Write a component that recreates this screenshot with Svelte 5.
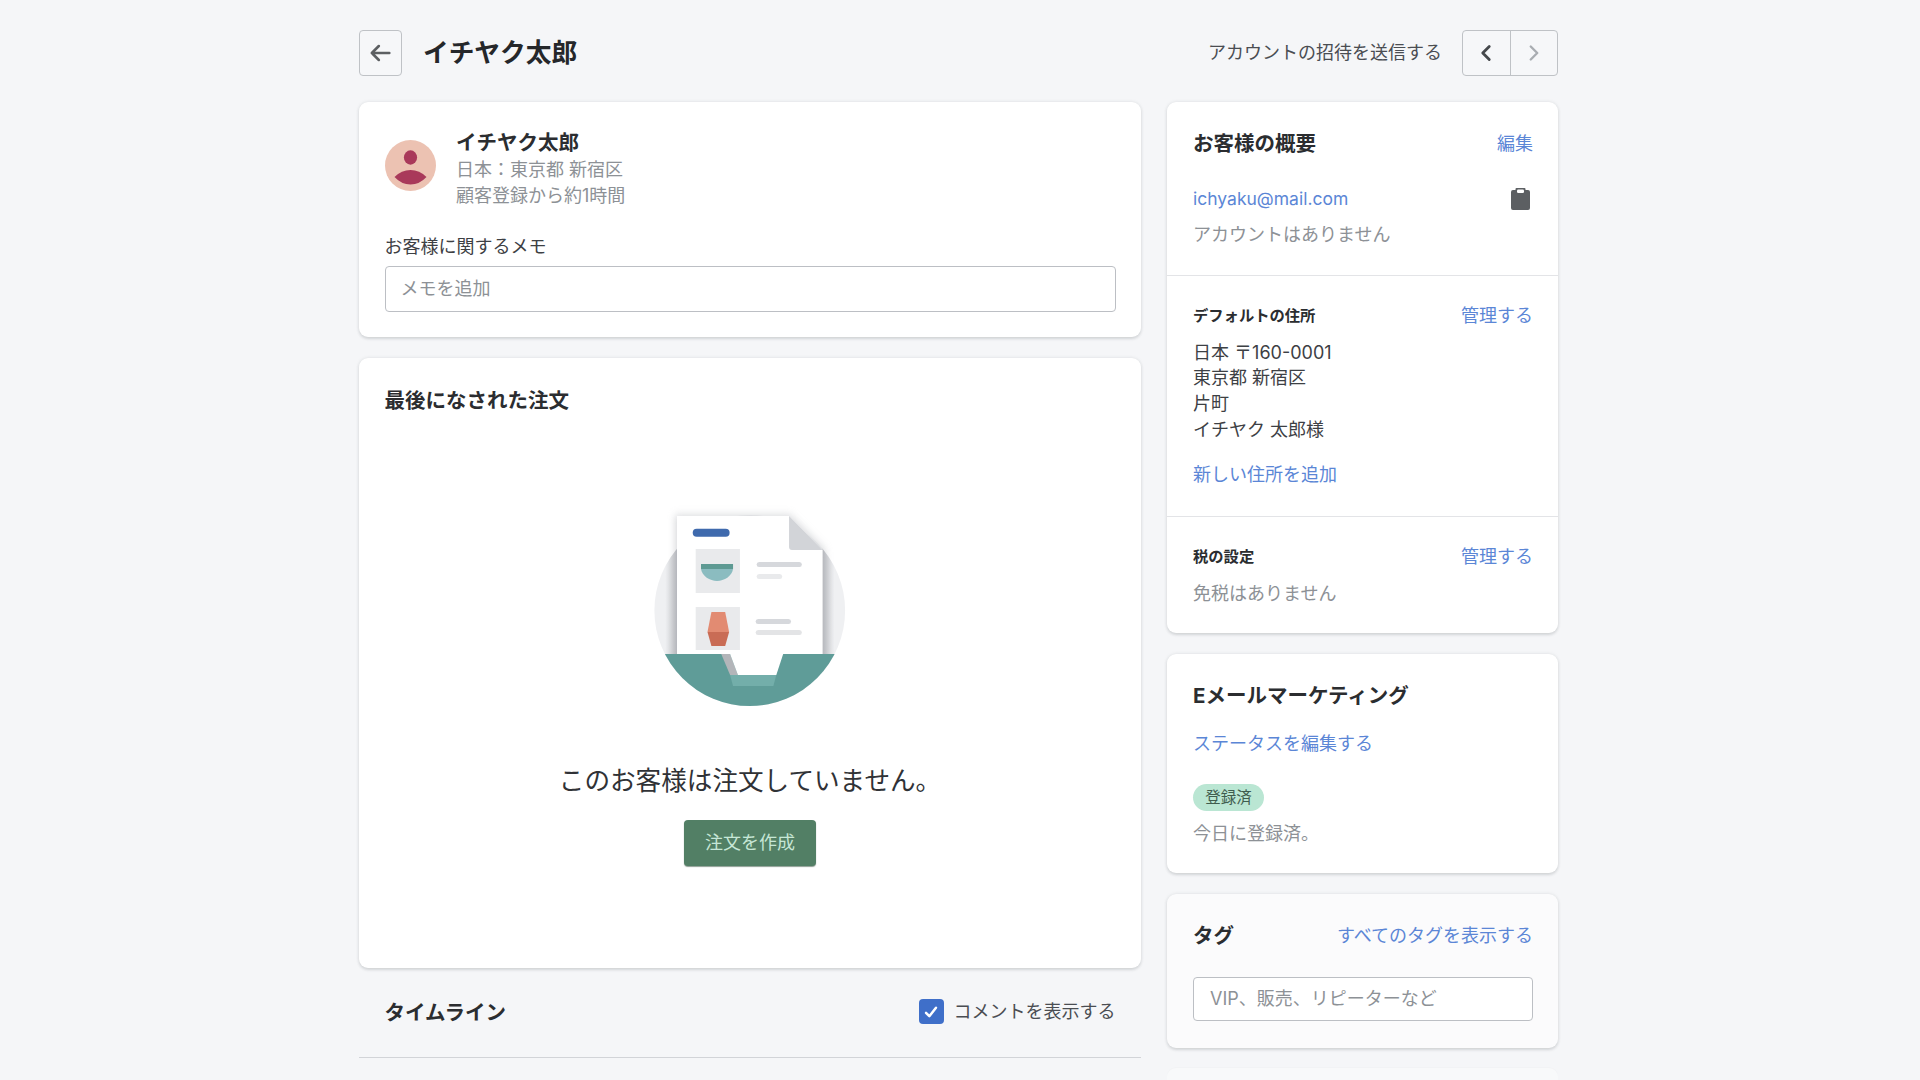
<script>
	const address = ["日本 〒160-0001", "東京都 新宿区", "片町", "イチヤク 太郎様"];
</script>

<div class="page">
	<div class="wrap">
		<header class="topbar">
			<button class="icon-btn back" type="button" aria-label="戻る">
				<svg viewBox="0 0 24 24" width="28" height="28" fill="none" stroke="#5c5f62" stroke-width="2.2" stroke-linecap="round" stroke-linejoin="round">
					<path d="M20 12H5M11 6l-6 6 6 6" />
				</svg>
			</button>
			<h1>イチヤク太郎</h1>
			<span class="invite">アカウントの招待を送信する</span>
			<div class="pager">
				<button type="button" aria-label="前へ">
					<svg viewBox="0 0 24 24" width="26" height="26" fill="none" stroke="#45484c" stroke-width="2.6" stroke-linecap="round" stroke-linejoin="round"><path d="M15 6l-6 6 6 6" /></svg>
				</button>
				<button type="button" aria-label="次へ">
					<svg viewBox="0 0 24 24" width="26" height="26" fill="none" stroke="#a9adb2" stroke-width="2.2" stroke-linecap="round" stroke-linejoin="round"><path d="M9 6l6 6-6 6" /></svg>
				</button>
			</div>
		</header>

		<div class="columns">
			<main class="col-main">
				<section class="card profile">
					<div class="who">
						<svg class="avatar" viewBox="0 0 51 51" width="51" height="51">
							<circle cx="25.5" cy="25.5" r="25.5" fill="#ecc2b2" />
							<ellipse cx="25.5" cy="17.5" rx="6.6" ry="7.2" fill="#a9395a" />
							<path d="M9.5 37Q16.5 30 25.5 30T41.5 37Q34.5 44.5 25.5 44.5T9.5 37z" fill="#a9395a" />
						</svg>
						<div class="who-text">
							<div class="name">イチヤク太郎</div>
							<div class="muted">日本：東京都 新宿区</div>
							<div class="muted">顧客登録から約1時間</div>
						</div>
					</div>
					<div class="label">お客様に関するメモ</div>
					<div class="field">メモを追加</div>
				</section>

				<section class="card orders">
					<h2>最後になされた注文</h2>
					<div class="empty">
						<svg class="illus" viewBox="0 0 260 240" width="260" height="240">
							<defs>
								<clipPath id="disc"><ellipse cx="132" cy="120.5" rx="97" ry="95.5" /></clipPath>
								<clipPath id="above"><rect x="0" y="0" width="270" height="164" /></clipPath>
								<filter id="soft" x="-20%" y="-20%" width="140%" height="140%"><feGaussianBlur stdDeviation="4" /></filter>
								<linearGradient id="shadeL" x1="0" x2="1" y1="0" y2="0">
									<stop offset="0" stop-color="#c4c6ca" stop-opacity="0" />
									<stop offset="1" stop-color="#b4b6bb" />
								</linearGradient>
								<linearGradient id="shadeR" x1="0" x2="1" y1="0" y2="0">
									<stop offset="0" stop-color="#b4b6bb" />
									<stop offset="1" stop-color="#c4c6ca" stop-opacity="0" />
								</linearGradient>
							</defs>
							<g transform="scale(0.983 1)">
								<g clip-path="url(#disc)">
									<rect x="30" y="20" width="210" height="200" fill="#eff0f2" />
									<rect x="46" y="50" width="12" height="115" fill="url(#shadeL)" />
									<rect x="206" y="50" width="12" height="115" fill="url(#shadeR)" />
									<rect x="30" y="164" width="210" height="60" fill="#5f9c98" />
								</g>
								<g clip-path="url(#above)">
									<path d="M56 25H173L209 60V170H56z" fill="#b9bbc0" opacity="0.55" filter="url(#soft)" />
								</g>
								<path d="M58 26H172L206 60V164H58z" fill="#fff" />
								<path d="M172 26L206 60H175Q172 60 172 57z" fill="#d2d4d8" />
								<rect x="74" y="38.7" width="37.5" height="8" rx="4" fill="#3f6aad" />
								<rect x="77" y="59" width="45" height="44" fill="#e9eaec" />
								<path d="M82.4 79H115C114 86 106 91 98.7 91S83.4 86 82.4 79z" fill="#8bbcc0" />
								<rect x="82.4" y="74" width="32.6" height="5" fill="#5e9a93" />
								<rect x="139" y="72" width="46" height="5" rx="2.5" fill="#d6d8dc" />
								<rect x="139" y="84" width="26" height="5" rx="2.5" fill="#e9eaec" />
								<rect x="77" y="117" width="45" height="43" fill="#e9eaec" />
								<path d="M93 122H107L111 142H89z" fill="#e28b72" />
								<path d="M89 142H111L107 156H93z" fill="#c96c55" />
								<rect x="138" y="129" width="36" height="5" rx="2.5" fill="#d6d8dc" />
								<rect x="138" y="140" width="47" height="5" rx="2.5" fill="#e3e4e6" />
								<path d="M103 164L112 185H120L112 164z" fill="#b3b5b9" />
								<path d="M112 164L120 185H159L166 164z" fill="#fff" />
								<path d="M112 185H159L156 196H115z" fill="#73aeaa" />
							</g>
						</svg>
						<p class="empty-title">このお客様は注文していません。</p>
						<button class="primary" type="button">注文を作成</button>
					</div>
				</section>

				<div class="timeline">
					<h2>タイムライン</h2>
					<label class="check">
						<span class="box">
							<svg viewBox="0 0 24 24" width="20" height="20" fill="none" stroke="#fff" stroke-width="3" stroke-linecap="round" stroke-linejoin="round"><path d="M6 13l4 4 8-10" /></svg>
						</span>
						コメントを表示する
					</label>
				</div>
			</main>

			<aside class="col-side">
				<section class="card">
					<div class="block first">
						<div class="row">
							<h2>お客様の概要</h2>
							<a href="#edit">編集</a>
						</div>
						<div class="row email">
							<a href="#mail">ichyaku@mail.com</a>
							<svg class="clip" viewBox="0 0 19 22" width="19" height="22">
								<path d="M2 2h2.5V1a1 1 0 0 1 1-1h8a1 1 0 0 1 1 1v1H17a2 2 0 0 1 2 2v16a2 2 0 0 1-2 2H2a2 2 0 0 1-2-2V4a2 2 0 0 1 2-2z" fill="#5c5f62" />
								<rect x="6" y="1.5" width="7" height="3.5" rx="1.2" fill="#fff" />
							</svg>
						</div>
						<div class="muted none">アカウントはありません</div>
					</div>
					<div class="block">
						<div class="row">
							<h3>デフォルトの住所</h3>
							<a href="#manage">管理する</a>
						</div>
						<div class="lines">
							{#each address as line}
								<div>{line}</div>
							{/each}
						</div>
						<a class="add" href="#add">新しい住所を追加</a>
					</div>
					<div class="block last">
						<div class="row">
							<h3>税の設定</h3>
							<a href="#tax">管理する</a>
						</div>
						<div class="muted tax">免税はありません</div>
					</div>
				</section>

				<section class="card pad">
					<h2>Eメールマーケティング</h2>
					<a class="status" href="#status">ステータスを編集する</a>
					<span class="badge">登録済</span>
					<div class="muted">今日に登録済。</div>
				</section>

				<section class="card pad tags">
					<div class="row">
						<h2>タグ</h2>
						<a href="#tags">すべてのタグを表示する</a>
					</div>
					<div class="field">VIP、販売、リピーターなど</div>
				</section>

				<section class="stub"></section>
			</aside>
		</div>
	</div>
</div>

<style>
:global(body) {
	margin: 0;
	background: #f5f6f8;
}

.page {
	height: 1080px;
	overflow: hidden;
	font-family: Inter, "Noto Sans CJK JP", sans-serif;
	font-size: 18px;
	line-height: 25.7px;
	color: #303236;
}

.wrap {
	width: 1199px;
	margin-left: 359px;
	padding-top: 30px;
}

h1, h2, h3, p {
	margin: 0;
}

h1 {
	font-size: 25.7px;
	line-height: 46px;
	font-weight: 700;
	color: #25272a;
	margin-left: 21px;
}

h2 {
	font-size: 20.5px;
	line-height: 27px;
	font-weight: 700;
	color: #2b2d30;
}

h3 {
	font-size: 15.3px;
	line-height: 25.7px;
	font-weight: 700;
	color: #2b2d30;
}

a {
	color: #5b86d6;
	text-decoration: none;
}

button {
	font: inherit;
	cursor: pointer;
}

.topbar {
	display: flex;
	align-items: center;
	height: 46px;
}

.icon-btn,
.pager {
	border: 1.5px solid #bfc2c6;
	border-radius: 4px;
	background: #f6f7f9;
	box-sizing: border-box;
	height: 46px;
}

.back {
	width: 43px;
	padding: 0 1px 0 0;
	display: flex;
	align-items: center;
	justify-content: center;
}

.invite {
	margin-left: auto;
	margin-right: 20px;
	color: #4a4d52;
}

.pager {
	display: flex;
	width: 96px;
}

.pager button {
	flex: 1;
	padding: 0;
	border: 0;
	background: none;
	display: flex;
	align-items: center;
	justify-content: center;
}

.pager button + button {
	border-left: 1.5px solid #bfc2c6;
}

.columns {
	display: grid;
	grid-template-columns: 782px 391px;
	gap: 26px;
	margin-top: 26px;
	align-items: start;
}

.col-main,
.col-side {
	display: flex;
	flex-direction: column;
	gap: 21px;
}

.card {
	background: #fff;
	border-radius: 9px;
	box-shadow: 0 0 4px rgba(40, 50, 60, 0.07), 0 1.5px 3px rgba(40, 50, 60, 0.14);
}

.profile {
	padding: 26px 25.5px;
	height: 235px;
	box-sizing: border-box;
}

.who {
	display: flex;
	align-items: flex-start;
	gap: 20.5px;
	height: 80px;
}

.avatar {
	flex: none;
	margin-top: 12px;
}

.who-text {
	padding-top: 1px;
}

.name {
	font-size: 20.5px;
	line-height: 28px;
	font-weight: 700;
	color: #2b2d30;
}

.muted {
	color: #8d9196;
}

.label {
	margin-top: 26px;
	color: #3d4044;
}

.field {
	box-sizing: border-box;
	height: 46px;
	margin-top: 6px;
	padding: 0 15px;
	display: flex;
	align-items: center;
	background: #fff;
	border: 1.5px solid #bcbfc4;
	border-radius: 4px;
	color: #8d9196;
}

.orders {
	height: 610px;
	box-sizing: border-box;
	padding: 29px 25.5px 26px;
}

.empty {
	display: flex;
	flex-direction: column;
	align-items: center;
	margin-top: 76px;
}

.illus {
	display: block;
}

.empty-title {
	margin-top: 35px;
	font-size: 25.6px;
	line-height: 32px;
	color: #303236;
}

.primary {
	margin-top: 23px;
	width: 132px;
	height: 46px;
	border: 0;
	border-radius: 4px;
	background: #527f65;
	color: #c6e6d6;
	box-shadow: 0 1px 1px rgba(30, 60, 40, 0.5);
}

.timeline {
	display: flex;
	align-items: flex-start;
	justify-content: space-between;
	box-sizing: border-box;
	height: 69px;
	padding: 10px 25.5px 0;
	border-bottom: 1.5px solid #d2d4d8;
}

.check {
	display: flex;
	align-items: center;
	gap: 10px;
	color: #4a4d52;
}

.box {
	width: 25px;
	height: 25px;
	border-radius: 4px;
	background: #3f6fc9;
	display: flex;
	align-items: center;
	justify-content: center;
}

.block {
	padding: 27px 25px 28px 26px;
}

.block.first {
	padding-top: 28px;
}

.block.last {
	padding-bottom: 26.5px;
}

.block + .block {
	border-top: 1.5px solid #e3e4e7;
}

.row {
	display: flex;
	align-items: center;
	justify-content: space-between;
}

.email {
	margin-top: 29px;
	font-size: 17.5px;
}

.clip {
	margin-right: 3px;
}

.none {
	margin-top: 10px;
}

.lines {
	margin-top: 10.5px;
	color: #3d4044;
}

.add {
	display: block;
	margin-top: 20px;
}

.tax {
	margin-top: 11px;
}

.pad {
	padding: 28px 25px 27px 26px;
	display: flex;
	flex-direction: column;
	align-items: flex-start;
}

.status {
	margin-top: 22px;
}

.badge {
	margin-top: 27px;
	height: 27px;
	width: 71px;
	border-radius: 14px;
	background: #bae6d3;
	color: #3f5c4e;
	font-size: 15.5px;
	line-height: 27px;
	text-align: center;
}

.pad > .muted {
	margin-top: 10px;
}

.tags {
	background: #fbfbfc;
	align-items: stretch;
	height: 154px;
	box-sizing: border-box;
	padding-top: 29px;
}

.tags h2 {
	margin-top: -2px;
}

.tags .field {
	margin-top: 28px;
	padding: 0 16px;
}

.stub {
	height: 40px;
	margin-top: -1px;
	background: #f8f9fa;
	border-radius: 9px 9px 0 0;
	box-shadow: 0 -1px 1px rgba(40, 50, 60, 0.015);
}
</style>
